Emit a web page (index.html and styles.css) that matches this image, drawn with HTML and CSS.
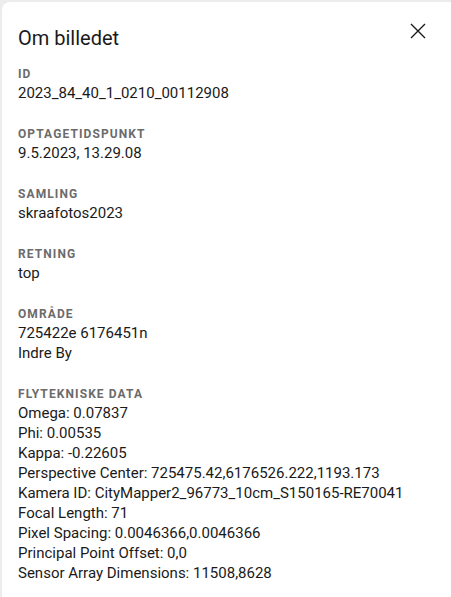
FILE: index.html
```html
<!DOCTYPE html>
<html lang="da">
<head>
  <meta charset="UTF-8" />
  <meta name="viewport" content="width=device-width, initial-scale=1.0"/>
  <title>Om billedet</title>
  <link rel="stylesheet" href="styles.css">
</head>
<body>
  <aside class="panel">
    <header class="panel-header">
      <h2>Om billedet</h2>
      <button class="close-btn" aria-label="Luk">
        <svg width="24" height="24" viewBox="0 0 24 24">
          <path d="M5 5 L19 19 M19 5 L5 19" stroke="#1a1a1a" stroke-width="1.4" fill="none"/>
        </svg>
      </button>
    </header>

    <dl class="meta">
      <div class="meta-item">
        <dt>ID</dt>
        <dd>2023_84_40_1_0210_00112908</dd>
      </div>
      <div class="meta-item">
        <dt>Optagetidspunkt</dt>
        <dd>9.5.2023, 13.29.08</dd>
      </div>
      <div class="meta-item">
        <dt>Samling</dt>
        <dd>skraafotos2023</dd>
      </div>
      <div class="meta-item">
        <dt>Retning</dt>
        <dd>top</dd>
      </div>
      <div class="meta-item">
        <dt>Område</dt>
        <dd>725422e 6176451n</dd>
        <dd>Indre By</dd>
      </div>
      <div class="meta-item">
        <dt>Flytekniske data</dt>
        <dd>Omega: 0.07837</dd>
        <dd>Phi: 0.00535</dd>
        <dd>Kappa: -0.22605</dd>
        <dd>Perspective Center: 725475.42,6176526.222,1193.173</dd>
        <dd>Kamera ID: CityMapper2_96773_10cm_S150165-RE70041</dd>
        <dd>Focal Length: 71</dd>
        <dd>Pixel Spacing: 0.0046366,0.0046366</dd>
        <dd>Principal Point Offset: 0,0</dd>
        <dd>Sensor Array Dimensions: 11508,8628</dd>
      </div>
    </dl>
  </aside>
</body>
</html>
```

FILE: styles.css
```css
html, body {
  height: 100%;
}

body {
  margin: 0;
  padding: 2px 0 0 2px;
  box-sizing: border-box;
  font-family: Roboto, 'Liberation Sans', sans-serif;
  background-color: #ececec;
  color: #1a1a1a;
  overflow: hidden;
}

.panel {
  background: white;
  height: 100%;
  border-radius: 8px 0 0 0;
  padding: 0 16px 0 16px;
  box-sizing: border-box;
}

.panel-header {
  display: flex;
  justify-content: space-between;
  align-items: flex-start;
  padding-top: 24px;
  height: 24px;
}

.panel-header h2 {
  margin: 0;
  font-size: 20px;
  font-weight: 400;
  line-height: 24px;
}

.close-btn {
  background: none;
  border: none;
  padding: 0;
  margin: -7px 5px 0 0;
  width: 24px;
  height: 24px;
  cursor: pointer;
}

.close-btn svg {
  display: block;
}

.meta {
  margin: 15px 0 0 0;
}

.meta-item {
  margin-bottom: 22px;
}

.meta-item dt {
  font-size: 12px;
  font-weight: 700;
  line-height: 18px;
  letter-spacing: 1.1px;
  text-transform: uppercase;
  color: #6b6b6b;
}

.meta-item dd {
  margin: 0;
  font-size: 15px;
  line-height: 20px;
}
```
